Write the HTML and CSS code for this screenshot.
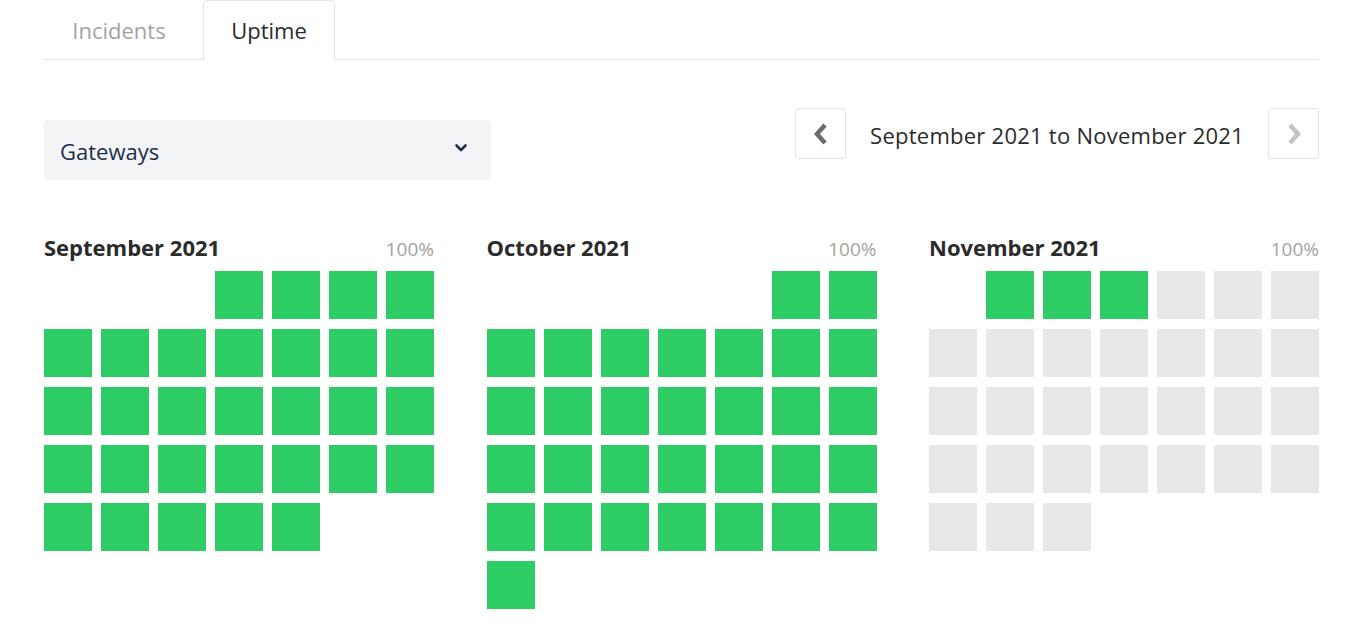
FILE: index.html
```html
<!DOCTYPE html>
<html>
<head>
<meta charset="utf-8">
<link rel="stylesheet" href="styles.css">
</head>
<body>
<div class="page">
  <div class="tabs">
    <div class="tab">Incidents</div>
    <div class="tab active">Uptime</div>
  </div>
  <div class="controls">
    <div class="select">
      <span>Gateways</span>
      <svg class="chev" width="14" height="10" viewBox="0 0 14 10"><path d="M2.5 2.5 L7 7 L11.5 2.5" fill="none" stroke="#1f2d4d" stroke-width="2.6" stroke-linecap="round" stroke-linejoin="round"/></svg>
    </div>
    <div class="range">
      <button class="nav"><svg width="20" height="24" viewBox="0 0 20 24"><path d="M14 3 L6 12 L14 21" fill="none" stroke="#6b6b6b" stroke-width="4.5" stroke-linejoin="miter"/></svg></button>
      <div class="range-text">September 2021 to November 2021</div>
      <button class="nav"><svg width="20" height="24" viewBox="0 0 20 24"><path d="M6 3 L14 12 L6 21" fill="none" stroke="#c4c4c4" stroke-width="4.5" stroke-linejoin="miter"/></svg></button>
    </div>
  </div>
  <div class="months">
    <div class="month">
      <div class="mhead"><span class="mname">September 2021</span><span class="pct">100%</span></div>
      <div class="cal">
        <i class="e"></i><i class="e"></i><i class="e"></i>
        <i class="g"></i><i class="g"></i><i class="g"></i><i class="g"></i>
        <i class="g"></i><i class="g"></i><i class="g"></i><i class="g"></i><i class="g"></i><i class="g"></i><i class="g"></i>
        <i class="g"></i><i class="g"></i><i class="g"></i><i class="g"></i><i class="g"></i><i class="g"></i><i class="g"></i>
        <i class="g"></i><i class="g"></i><i class="g"></i><i class="g"></i><i class="g"></i><i class="g"></i><i class="g"></i>
        <i class="g"></i><i class="g"></i><i class="g"></i><i class="g"></i><i class="g"></i>
      </div>
    </div>
    <div class="month">
      <div class="mhead"><span class="mname">October 2021</span><span class="pct">100%</span></div>
      <div class="cal">
        <i class="e"></i><i class="e"></i><i class="e"></i><i class="e"></i><i class="e"></i>
        <i class="g"></i><i class="g"></i>
        <i class="g"></i><i class="g"></i><i class="g"></i><i class="g"></i><i class="g"></i><i class="g"></i><i class="g"></i>
        <i class="g"></i><i class="g"></i><i class="g"></i><i class="g"></i><i class="g"></i><i class="g"></i><i class="g"></i>
        <i class="g"></i><i class="g"></i><i class="g"></i><i class="g"></i><i class="g"></i><i class="g"></i><i class="g"></i>
        <i class="g"></i><i class="g"></i><i class="g"></i><i class="g"></i><i class="g"></i><i class="g"></i><i class="g"></i>
        <i class="g"></i>
      </div>
    </div>
    <div class="month">
      <div class="mhead"><span class="mname">November 2021</span><span class="pct">100%</span></div>
      <div class="cal">
        <i class="e"></i>
        <i class="g"></i><i class="g"></i><i class="g"></i>
        <i class="f"></i><i class="f"></i><i class="f"></i>
        <i class="f"></i><i class="f"></i><i class="f"></i><i class="f"></i><i class="f"></i><i class="f"></i><i class="f"></i>
        <i class="f"></i><i class="f"></i><i class="f"></i><i class="f"></i><i class="f"></i><i class="f"></i><i class="f"></i>
        <i class="f"></i><i class="f"></i><i class="f"></i><i class="f"></i><i class="f"></i><i class="f"></i><i class="f"></i>
        <i class="f"></i><i class="f"></i><i class="f"></i>
      </div>
    </div>
  </div>
</div>
</body>
</html>
```

FILE: styles.css
```css
* { box-sizing: border-box; }
html, body { margin: 0; padding: 0; background: #fff; }
body { font-family: "Open Sans", "Lato", sans-serif; color: #2b2b2b; }
.page { padding: 0 48px 0 44px; }

.tabs {
  display: flex;
  border-bottom: 1px solid #e2e2e2;
  height: 60px;
}
.tab {
  height: 60px;
  width: 159px;
  display: flex;
  align-items: center;
  justify-content: center;
  font-size: 22px;
  color: #a3a3a3;
  padding: 0 9px 1px 0;
}
.tab.active {
  width: 132px;
  padding: 0 0 1px 0;
  color: #2b2b2b;
  background: #fff;
  border: 1px solid #e2e2e2;
  border-bottom: 1px solid #fff;
  border-radius: 5px 5px 0 0;
}

.controls {
  display: flex;
  justify-content: space-between;
  align-items: flex-start;
  margin-top: 48px;
}
.select {
  margin-top: 12px;
  width: 447px;
  height: 60px;
  background: #f3f4f6;
  border-radius: 4px;
  display: flex;
  align-items: center;
  justify-content: space-between;
  padding: 0 23px 0 16px;
  font-family: "Open Sans", sans-serif;
  font-size: 22px;
  color: #1f2d4d;
}
.select span { margin-top: 2px; }
.chev { margin-top: -4px; }

.range { display: flex; align-items: center; }
.nav {
  width: 51px;
  height: 51px;
  border: 1px solid #e2e2e2;
  border-radius: 4px;
  background: #fff;
  display: flex;
  align-items: center;
  justify-content: center;
  padding: 0;
}
.range-text {
  font-size: 22px;
  letter-spacing: 0.25px;
  color: #2b2b2b;
  margin: 0 24px;
  padding-top: 2px;
  white-space: nowrap;
}

.months {
  display: grid;
  grid-template-columns: repeat(3, 390px);
  justify-content: space-between;
  margin-top: 55px;
}
.mhead {
  display: flex;
  justify-content: space-between;
  align-items: baseline;
  height: 24px;
  margin-bottom: 12px;
}
.mname { font-size: 22px; font-weight: 700; color: #2b2b2b; line-height: 24px; }
.pct { font-size: 19px; color: #a3a3a3; }
.cal {
  display: grid;
  grid-template-columns: repeat(7, 48px);
  grid-auto-rows: 48px;
  gap: 10px 9px;
}
.cal i { display: block; }
.cal .g { background: #2ecc65; }
.cal .f { background: #e8e8e8; }
```
